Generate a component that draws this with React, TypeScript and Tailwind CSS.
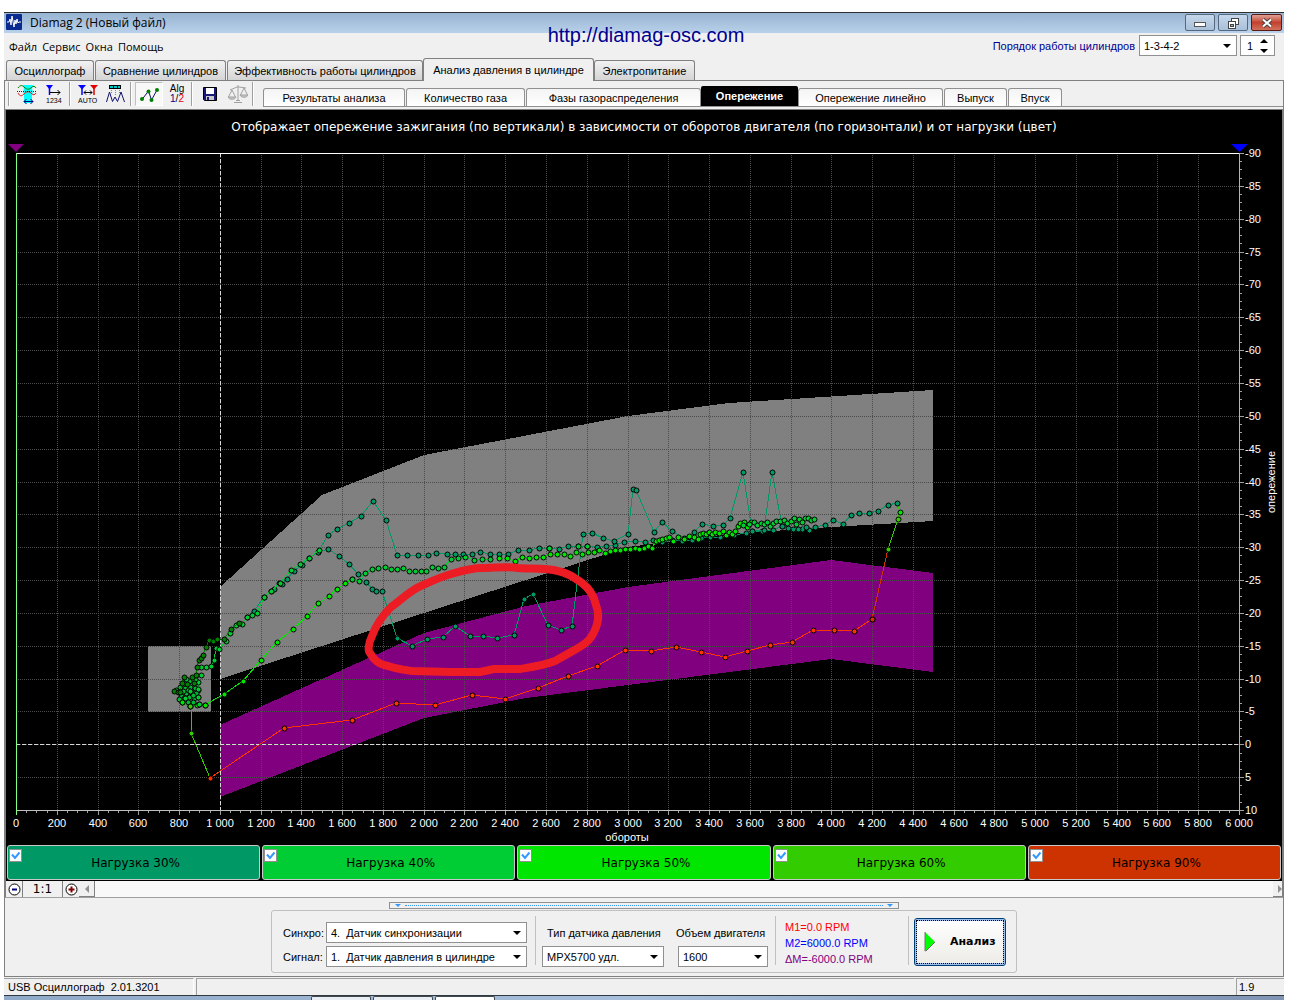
import React from "react";

const X0 = 16;
const X1 = 1239;
const Y0 = 153;
const Y1 = 810;
const px = (rpm: number) => Math.round(X0 + (rpm * (X1 - X0)) / 6000);
const py = (deg: number) => Math.round(Y0 + (deg + 90) * ((Y1 - Y0) / 100));
const area = (pts: number[][]) => pts.map(([a, b]) => `${px(a)},${py(b)}`).join(" ");
const poly = (pts: number[][]) => pts.map((p) => p.join(",")).join(" ");

const greyArea = [
  [1000, -24], [1500, -38], [2000, -44], [3000, -50], [3500, -52], [4500, -54],
  [4500, -34], [4000, -33], [3500, -32], [3000, -30], [1000, -10],
];
const purpleArea = [
  [1000, -3], [2000, -17], [2500, -21], [3000, -24], [4000, -28], [4500, -26],
  [4500, -11], [4000, -13], [3000, -9], [2500, -7], [2000, -4], [1000, 8],
];

const load30 = [
  [247, 617], [254, 611], [264, 597], [271, 591], [274, 589], [279, 583], [282, 584], [287, 579], [294, 571],
  [302, 565], [309, 558], [318, 552], [328, 535], [337, 529], [349, 523], [361, 516], [373, 501], [386, 520],
  [397, 555], [407, 555], [418, 555], [428, 555], [436, 553], [447, 554], [455, 554], [463, 554], [472, 554],
  [480, 552], [490, 554], [499, 554], [508, 554], [518, 550], [529, 550], [539, 548], [549, 548], [559, 549],
  [568, 546], [578, 546], [587, 546], [597, 547], [606, 546], [615, 545], [624, 542], [635, 541], [645, 542],
  [653, 540], [662, 542], [672, 540], [682, 541], [692, 540], [701, 538], [710, 537], [720, 537], [734, 535],
  [746, 533], [752, 531], [762, 531], [773, 530], [782, 526], [793, 529], [802, 529], [809, 530], [815, 527],
  [825, 525], [833, 520], [843, 524], [851, 515], [859, 513], [869, 513], [878, 511], [888, 505], [897, 503],
];
const load30Low = [
  [318, 552], [328, 549], [339, 556], [349, 564], [358, 574], [366, 582], [372, 589], [376, 591], [382, 591],
  [397, 638], [412, 646], [427, 639], [443, 637], [455, 626], [470, 636], [483, 636], [497, 638], [514, 635],
  [524, 599], [533, 594], [548, 625], [561, 630], [572, 626], [583, 534], [592, 533], [603, 538], [614, 541],
  [628, 534], [633, 489], [636, 490], [654, 532], [662, 522], [672, 531], [684, 538], [694, 532], [702, 524],
  [713, 526], [723, 525], [730, 518], [743, 472], [752, 531], [764, 530], [772, 472], [782, 526], [788, 528],
  [798, 529], [806, 527],
];
const load40Rise = [
  [198, 690], [198, 682], [201, 675], [201, 667], [206, 667], [211, 666], [214, 660], [216, 648], [219, 649],
  [226, 641], [230, 633], [236, 625], [242, 624], [247, 617], [252, 615], [257, 613], [264, 597], [271, 591],
  [280, 583], [291, 570], [300, 564], [309, 558], [319, 550],
];
const load40 = [
  [352, 579], [359, 581], [365, 573], [372, 569], [378, 568], [385, 567], [391, 569], [397, 569], [403, 568],
  [409, 571], [415, 571], [421, 571], [426, 571], [432, 567], [438, 568], [444, 567], [451, 559], [458, 558],
  [465, 557], [474, 560], [482, 559], [490, 559],
];
const load50Rise = [
  [182, 702], [190, 706], [197, 705], [205, 705], [224, 694], [243, 681], [261, 660], [277, 642], [293, 629],
  [307, 616], [318, 603], [329, 596], [337, 589], [345, 583], [352, 579],
];
const load50 = [
  [499, 558], [507, 558], [515, 561], [522, 557], [529, 558], [536, 557], [543, 557], [550, 554], [557, 554],
  [564, 554], [570, 556], [576, 552], [582, 554], [588, 552], [594, 552], [599, 550], [605, 553], [610, 551],
  [615, 550], [620, 550], [625, 549], [630, 549], [635, 548], [639, 549], [644, 548], [648, 546], [652, 548],
  [656, 541], [659, 540], [662, 539], [666, 538], [669, 537], [673, 541], [678, 537], [684, 539], [689, 536],
  [694, 537], [698, 539], [700, 534], [703, 533], [706, 534], [709, 532], [712, 534], [715, 532], [719, 533],
  [723, 531], [726, 535], [729, 532], [732, 534], [735, 531], [738, 526], [740, 523], [744, 522], [747, 527],
  [751, 522],
];
const loadMix = [
  [743, 525], [749, 524], [754, 522], [757, 525], [761, 523], [764, 524], [767, 522], [770, 526], [773, 523],
  [776, 521], [780, 521], [784, 520], [787, 523], [791, 521], [794, 518], [796, 524], [799, 519], [802, 522],
  [805, 518], [808, 518], [811, 520], [814, 519],
];
const loadDark = [
  [174, 691], [178, 692], [180, 692], [184, 677], [182, 683], [187, 684], [192, 677], [194, 683], [196, 675],
  [197, 667], [199, 660], [201, 658], [203, 655], [206, 647], [209, 640], [213, 641], [217, 639], [224, 639],
  [231, 629], [239, 623],
];
const idleCloud = [
  [176, 690], [180, 687], [185, 688], [190, 687], [195, 688], [181, 696], [186, 693], [191, 692], [196, 693],
  [179, 699], [184, 698], [189, 697], [194, 698], [198, 697], [188, 702], [193, 702], [199, 704], [189, 681],
  [186, 679], [195, 679], [183, 691], [188, 690], [193, 695],
];
const load60 = [[191, 733], [190, 706]];
const load90 = [
  [210, 778], [284, 728], [352, 720], [396, 703], [435, 705], [472, 695], [505, 699], [538, 688], [568, 676],
  [597, 666], [625, 650], [651, 651], [676, 647], [701, 652], [725, 657], [747, 651], [770, 645], [792, 642],
  [813, 630], [834, 630], [854, 631], [872, 619],
];

function Series({ pts, color, line = true }: { pts: number[][]; color: string; line?: boolean }) {
  return (
    <g>
      {line && <polyline points={poly(pts)} fill="none" stroke={color} shapeRendering="crispEdges" />}
      {pts.map(([x, y], i) => <circle key={i} cx={x + 0.5} cy={y + 0.5} r="2.5" fill={color} stroke="#000" />)}
    </g>
  );
}

function Chart() {
  const xs = Array.from({ length: 31 }, (_, i) => i * 200);
  const ys = Array.from({ length: 21 }, (_, i) => -90 + i * 5);
  const minorX = Array.from({ length: 121 }, (_, i) => i * 50);
  const minorY = Array.from({ length: 81 }, (_, i) => -90 + i * 1.25);
  const label = (n: number) => (n < 1000 ? String(n) : `${Math.floor(n / 1000)} ${String(n % 1000).padStart(3, "0")}`);
  return (
    <svg viewBox="6 110 1276 735" className="block w-full bg-black font-['Liberation_Sans',sans-serif]" role="img" aria-label="Опережение зажигания">
      <text x="644" y="131" textAnchor="middle" fill="#fff" className="font-['DejaVu_Sans',sans-serif] text-[12px]">
        Отображает опережение зажигания (по вертикали) в зависимости от оборотов двигателя (по горизонтали) и от нагрузки (цвет)
      </text>
      <g shapeRendering="crispEdges">
        <polygon points={area(greyArea)} fill="#808080" />
        <rect x="148" y="646" width="63" height="66" fill="#808080" />
        <polygon points={area(purpleArea)} fill="#800080" />
      </g>
      <g shapeRendering="crispEdges" stroke="#4c4c4c" strokeDasharray="1 1">
        {xs.slice(1, 30).map((v) => <line key={v} x1={px(v) + 0.5} x2={px(v) + 0.5} y1={Y0} y2={Y1} />)}
        {ys.slice(1, 20).map((v) => <line key={v} x1={X0} x2={X1} y1={py(v) + 0.5} y2={py(v) + 0.5} />)}
      </g>
      <g shapeRendering="crispEdges">
        <line x1="220.5" x2="220.5" y1={Y0} y2={Y1} stroke="#d8d8d8" strokeDasharray="4 2" />
        <line x1={X0} x2={X1} y1="744.5" y2="744.5" stroke="#d8d8d8" strokeDasharray="4 2" />
        <line x1={X0} x2={X1} y1="153.5" y2="153.5" stroke="#fff" />
        <line x1={X0} x2="1244" y1="810.5" y2="810.5" stroke="#c0c0c0" />
        {minorX.map((v) => <line key={v} x1={px(v) + 0.5} x2={px(v) + 0.5} y1="811" y2={v % 200 ? 813 : 815} stroke="#a0a0a0" />)}
        {minorY.map((v) => <line key={v} x1="1240" x2={v % 5 ? 1242 : 1244} y1={py(v) + 0.5} y2={py(v) + 0.5} stroke="#a0a0a0" />)}
        <line x1="16.5" x2="16.5" y1={Y0} y2="815" stroke="#80ff80" />
        <line x1="1239.5" x2="1239.5" y1={Y0} y2="815" stroke="#c0c050" />
      </g>
      <polygon points="8,144 24,144 16,152" fill="#800080" />
      <polygon points="1231,144 1248,144 1239.5,152" fill="#00f" />

      <polyline points="191,706 191,733 210,778" fill="none" stroke="#33cc00" shapeRendering="crispEdges" />
      <Series pts={load90} color="#ff3300" />
      <polyline points="872,619 888,549" stroke="#cc3300" fill="none" shapeRendering="crispEdges" />
      <polyline points="888,549 898,519 900,512 897,503" stroke="#33cc00" fill="none" shapeRendering="crispEdges" />
      <Series pts={load30} color="#009966" />
      <Series pts={load30Low} color="#009966" />
      <Series pts={load50Rise} color="#00e600" />
      <Series pts={load40Rise} color="#00cc33" />
      <Series pts={idleCloud} color="#00b833" line={false} />
      <Series pts={loadDark} color="#008000" />
      <Series pts={load40} color="#00cc33" />
      <Series pts={load50} color="#00e600" />
      <Series pts={loadMix} color="#00cc33" line={false} />
      <Series pts={[[549, 548], [578, 546], [587, 546]]} color="#00cc33" line={false} />
      <Series pts={[[198, 697], [199, 704], [198, 689], [190, 691], [185, 698]]} color="#00cc33" line={false} />
      <Series pts={[[182, 702], [190, 706], [205, 705], [900, 512]]} color="#00e600" line={false} />
      <Series pts={load60} color="#33cc00" line={false} />
      <Series pts={[[898, 519], [888, 549]]} color="#33cc00" line={false} />
      <Series pts={[[872, 619]]} color="#cc3300" line={false} />

      <path
        d="M518 568C508 566 494 568 483 568C468 568 455 573 448 575C438 578 430 582 423 585C410 590 400 601 391 607C383 615 376 625 372 636C368 644 368 651 370 653C374 660 378 664 388 666C396 669 405 670 412 671L450 672L480 672L494 669L520 669C532 667 545 665 555 661L571 652C584 645 590 641 594 632C600 620 598 610 596 605C594 596 590 589 582 583C574 577 568 573 558 571C546 568 530 569 518 568Z"
        fill="none" stroke="#ed1c24" strokeWidth="8" strokeLinejoin="round"
      />

      <g fill="#fff" className="text-[11px]">
        {xs.map((v) => <text key={v} x={px(v)} y="827" textAnchor="middle">{label(v)}</text>)}
        {ys.map((v) => <text key={v} x="1245" y={py(v) + 4}>{v}</text>)}
        <text x="627" y="841" textAnchor="middle">обороты</text>
        <text transform="translate(1275 482) rotate(-90)" textAnchor="middle">опережение</text>
      </g>
    </svg>
  );
}

const Tool = ({ label, children }: { label: string; children: React.ReactNode }) => (
  <button aria-label={label} className="flex h-6 w-7 items-center justify-center">
    <svg width="20" height="20" fill="none">{children}</svg>
  </button>
);

const Group = ({ children }: { children?: React.ReactNode }) => (
  <div className="flex h-6 w-[62px] border-l border-[#a0a0a0]">
    <span className="w-1 border-l border-white" />
    {children}
  </div>
);

function ToolIcons() {
  return (
    <div className="flex w-[258px] shrink-0 overflow-hidden pl-[3px] pt-px">
      <Group>
        <Tool label="Фазы">
          <path d="M6 1h10l-1 4 1 3-1 3v8H7v-8L6 8l1-3z" fill="#00ffff" />
          <path d="M1 4c2-3 4-3 6-1 3 3 5 3 8 0 1-1 3-1 4 1" stroke="#008000" />
          <path d="M1 9c2 4 4 3 6 1 3-3 5-3 8 0 1 1 3 1 4-1" stroke="#e02020" />
          <path d="M0 7.500h20" stroke="#222" strokeDasharray="1 1" shapeRendering="crispEdges" />
          <path d="M7 17.500h9M9.500 15l-2.500 2.500 2.500 2.500M13.500 15l2.500 2.500-2.500 2.500" stroke="#000080" />
        </Tool>
        <Tool label="Маркер 1234">
          <path d="M1 1h7L4.500 5.500z" fill="#00f" /><path d="M4.500 1v10" stroke="#00f" strokeWidth="1.500" />
          <path d="M5 8.500h10M12.500 6l2.500 2.500-2.500 2.500" stroke="#000" />
          <text x="1" y="19" fill="#000" className="text-[7px]">1234</text>
        </Tool>
      </Group>
      <Group>
        <Tool label="Авто">
          <path d="M0 1h8L4 5.500z" fill="#00f" /><path d="M4 1v10" stroke="#00f" strokeWidth="1.500" />
          <path d="M12 1h8l-4 4.500z" fill="#e00000" /><path d="M16 1v10" stroke="#e00000" strokeWidth="1.500" />
          <path d="M6 8.500h8M8 6.500l-2 2 2 2M12 6.500l2 2-2 2" stroke="#000" />
          <text x="0" y="19" fill="#000" className="text-[7px]">AUTO</text>
        </Tool>
        <Tool label="Датчик">
          <rect x="3.500" y="1.500" width="11" height="3" fill="#00c8c8" stroke="#000" shapeRendering="crispEdges" />
          <path d="M7.500 2v2M11.500 2v2" stroke="#000" shapeRendering="crispEdges" />
          <path d="M5.500 6v4M9.500 6v6M13.500 6v4" stroke="#888" strokeDasharray="1 1" shapeRendering="crispEdges" />
          <path d="M.5 18L3.500 8l3 9.500L9 13l2.500 4.500L15 8l3.500 10" stroke="#101070" />
        </Tool>
      </Group>
      <Group>
        <span className="flex h-6 w-7 items-center justify-center border border-[#c0c0c0] border-b-white border-r-white bg-[#f8f8f8]">
          <Tool label="Линии">
            <path d="M3 15.500L9.500 7l3 9 5.500-10" stroke="#101070" />
            <circle cx="3" cy="15" r="2" fill="#008000" /><circle cx="9.500" cy="7.500" r="2" fill="#008000" /><circle cx="12.500" cy="16" r="2" fill="#008000" /><circle cx="18" cy="6" r="2" fill="#008000" />
          </Tool>
        </span>
        <button aria-label="Алгоритм" className="flex h-6 w-7 flex-col items-center justify-center text-[10px] leading-[10px]">
          <span>Alg</span>
          <span><b className="font-normal text-[#000080]">1</b>/<b className="font-normal text-red-600">2</b></span>
        </button>
      </Group>
      <Group>
        <Tool label="Сохранить">
          <path d="M3.500 3.500h13v13h-12l-1-1z" fill="#181878" stroke="#000" />
          <rect x="6" y="4" width="8" height="6" fill="#fff" /><rect x="6" y="12" width="8" height="4" fill="#c8c8c8" /><rect x="7" y="13" width="2" height="3" fill="#181878" />
        </Tool>
        <Tool label="Сравнить">
          <path d="M2 6l7-3h2l7 1M10 1v16M6 18.500h8M8 16.500h4M4 6l-3.500 7M4 6l3.500 7M16 4l-3.500 7M16 4l3.500 7" stroke="#a0a0a0" />
          <path d="M0 13h8c-1 3-7 3-8 0zM12 11h8c-1 3-7 3-8 0z" stroke="#a0a0a0" fill="#c8c8c8" />
        </Tool>
      </Group>
      <Group />
    </div>
  );
}

const Drop = ({ label, value, w }: { label: string; value: string; w: string }) => (
  <span className={`relative block ${w}`}>
    <select aria-label={label} defaultValue={value} className="block h-[21px] w-full appearance-none border border-[#909090] bg-white pl-1 text-[11px] leading-[18px] text-black">
      <option value={value}>{value}</option>
    </select>
    <svg className="pointer-events-none absolute right-[6px] top-[9px]" width="8" height="4"><path d="M0 0h8L4 4z" fill="#000" /></svg>
  </span>
);

const loads = [
  ["Нагрузка 30%", "bg-[#009966]"],
  ["Нагрузка 40%", "bg-[#00cc33]"],
  ["Нагрузка 50%", "bg-[#00e600]"],
  ["Нагрузка 60%", "bg-[#33cc00]"],
  ["Нагрузка 90%", "bg-[#cc3300]"],
];

const tab = "h-5 rounded-t-[3px] border border-b-0 border-[#808080] bg-linear-to-b from-[#f2f2f2] to-[#d4d4d4] whitespace-nowrap";
const sub = "h-[18px] rounded-t-[3px] border border-b-0 border-[#909090] bg-linear-to-b from-[#f4f4f4] to-white whitespace-nowrap";

export default function App() {
  return (
    <div className="bg-white pl-1 pr-3 pt-3 font-['Liberation_Sans',sans-serif] text-[11px] leading-4 text-black">
      <div className="relative border-t border-[#303030] bg-[#f0f0f0]">
        <header className="flex h-5 items-center bg-linear-to-b from-[#98b4d2] to-[#b9d1ea] pl-[2px]">
          <svg width="16" height="16" className="-mt-0.5"><rect width="16" height="16" rx="1" fill="#0a2a90" /><path d="M1 8h2l1-3 1 6 1-9 2 11 1-7 1 4 1-5 1 4 1-1h2" stroke="#fff" fill="none" /></svg>
          <h1 className="ml-2 font-['Open_Sans',sans-serif] text-[12px] font-normal">Diamag 2 (Новый файл)</h1>
          <div className="-mt-px ml-auto flex gap-[3px] pr-[2px]">
            <button aria-label="Свернуть" className="flex h-[17px] w-[30px] items-center justify-center rounded-xs border border-[#56687e] bg-linear-to-b from-[#c5d7ea] to-[#a9c0da]">
              <svg width="12" height="5" className="mt-1"><rect x=".5" y=".5" width="11" height="4" fill="#fff" stroke="#555" /></svg>
            </button>
            <button aria-label="Восстановить" className="flex h-[17px] w-[30px] items-center justify-center rounded-xs border border-[#56687e] bg-linear-to-b from-[#c5d7ea] to-[#a9c0da]">
              <svg width="12" height="12"><rect x="4.500" y="1.500" width="7" height="6" fill="#fff" stroke="#444" /><rect x="1.500" y="4.500" width="7" height="7" fill="#fff" stroke="#444" /><rect x="3.500" y="7.500" width="3" height="2" fill="#8aa" stroke="#444" /></svg>
            </button>
            <button aria-label="Закрыть" className="flex h-[17px] w-[31px] items-center justify-center rounded-xs border border-[#5a1a14] bg-linear-to-b from-[#dfa096] via-[#c4402e] to-[#d0705c]">
              <svg width="12" height="10"><path d="M2 1.500l8 7M10 1.500l-8 7" stroke="#444" strokeWidth="4" /><path d="M2 1.500l8 7M10 1.500l-8 7" stroke="#fff" strokeWidth="2" /></svg>
            </button>
          </div>
        </header>
        <a href="http://diamag-osc.com" className="absolute inset-x-0 top-[10px] mx-auto w-fit pl-1 text-[20px] leading-6 text-[#000090]">http://diamag-osc.com</a>

        <div className="flex h-[25px] items-start pl-[5px] pr-[9px]">
          <nav className="mt-1.5 flex gap-[5px] font-['Open_Sans',sans-serif] text-[11px]">
            <button>Файл</button><button>Сервис</button><button>Окна</button><button>Помощь</button>
          </nav>
          <span className="ml-auto mr-1 mt-[5px] text-[#000090]">Порядок работы цилиндров</span>
          <span className="mt-[2px]"><Drop label="Порядок работы цилиндров" value="1-3-4-2" w="w-[98px]" /></span>
          <label className="ml-[3px] mt-[2px] flex h-[21px] w-[35px] items-center border border-[#909090] bg-white">
            <input aria-label="Цилиндр" defaultValue="1" className="w-[19px] bg-transparent pl-1.5" />
            <svg width="8" height="14"><path d="M0 4h8L4 0zM0 10h8l-4 4z" fill="#000" /></svg>
          </label>
        </div>

        <div role="tablist" className="flex h-[23px] items-end border-b border-[#808080] pl-[2px]">
          <button role="tab" className={`${tab} w-[88px]`}>Осциллограф</button>
          <button role="tab" className={`${tab} ml-px w-[131px]`}>Сравнение цилиндров</button>
          <button role="tab" className={`${tab} ml-px w-[196px]`}>Эффективность работы цилиндров</button>
          <button role="tab" aria-selected="true" className="-mb-px h-[23px] w-[171px] whitespace-nowrap rounded-t-[3px] border border-b-0 border-[#808080] bg-[#f0f0f0]">Анализ давления в цилиндре</button>
          <button role="tab" className={`${tab} w-[101px]`}>Электропитание</button>
        </div>

        <main className="border-x border-[#808080]">
          <div className="flex h-[28px] items-start">
            <ToolIcons />
            <div role="tablist" className="flex h-[26px] flex-1 items-end border-b border-[#909090]">
              <button role="tab" className={`${sub} w-[142px]`}>Результаты анализа</button>
              <button role="tab" className={`${sub} ml-px w-[119px]`}>Количество газа</button>
              <button role="tab" className={`${sub} ml-px w-[175px]`}>Фазы газораспределения</button>
              <button role="tab" aria-selected="true" className="h-5 w-[97px] rounded-t-[2px] bg-black font-bold text-white">Опережение</button>
              <button role="tab" className={`${sub} w-[145px]`}>Опережение линейно</button>
              <button role="tab" className={`${sub} ml-px w-[63px]`}>Выпуск</button>
              <button role="tab" className={`${sub} ml-px w-[54px]`}>Впуск</button>
            </div>
          </div>
          <div className="border-x border-t border-[#808080]">
            <Chart />
            <div className="grid grid-cols-5 gap-[2px] bg-black px-px pb-px">
              {loads.map(([name, bg]) => (
                <label key={name} className={`relative flex h-[35px] items-center justify-center rounded-[3px] border border-[#c8c8c8] ${bg} pl-1 font-['DejaVu_Sans',sans-serif] text-[12px]`}>
                  <input type="checkbox" defaultChecked className="absolute left-px top-[3px] size-[13px] appearance-none border border-[#909090] bg-white" />
                  <svg className="pointer-events-none absolute left-[3px] top-[5px]" width="9" height="9"><path d="M1 3.500l3 3.500L8.500 1.500" stroke="#3399ff" strokeWidth="2" fill="none" /></svg>
                  {name}
                </label>
              ))}
            </div>
            <div className="flex h-4 items-stretch bg-[#f8f8f8]">
              <button aria-label="Уменьшить" className="flex w-[17px] items-center justify-center border-r border-[#808080] bg-[#f0f0f0]"><svg width="13" height="13"><circle cx="6.500" cy="6.500" r="5.500" fill="#fff" stroke="#000" /><path d="M4 6.500h5" stroke="#000080" strokeWidth="2" /></svg></button>
              <button className="w-10 border-r border-[#808080] bg-[#f0f0f0] font-['DejaVu_Sans',sans-serif] text-[12px] leading-4">1:1</button>
              <button aria-label="Увеличить" className="flex w-4 items-center justify-center bg-[#f0f0f0]"><svg width="13" height="13"><circle cx="6.500" cy="6.500" r="5.500" fill="#fff" stroke="#000" /><path d="M3.500 6.500h6M6.500 3.500v6" stroke="#800000" strokeWidth="2" /></svg></button>
              <button aria-label="Влево" className="flex w-4 items-center justify-center border-b border-r border-[#808080] bg-[#f0f0f0]"><svg width="4" height="8"><path d="M4 0v8L0 4z" fill="#909090" /></svg></button>
              <button aria-label="Вправо" className="ml-auto flex w-[9px] items-center justify-end border-b border-[#808080] bg-[#f0f0f0]"><svg width="4" height="8"><path d="M0 0v8l4-4z" fill="#909090" /></svg></button>
            </div>
          </div>
          <div className="h-20 border-y border-b-[#808080] border-t-[#a0a0a0]">
            <div className="mx-auto mt-1 flex h-[7px] w-[510px] items-center border border-[#909090] px-[5px]">
              <svg width="6" height="3"><path d="M0 0h6L3 3z" fill="#3399ff" /></svg>
              <span className="mx-1 h-px flex-1 border-t border-dotted border-[#3399ff]" />
              <svg width="6" height="3"><path d="M0 0h6L3 3z" fill="#3399ff" /></svg>
            </div>
            <div className="mx-auto mt-px flex h-[63px] w-[746px] rounded-[3px] border border-[#c0c0c0] pl-[11px]">
              <div className="mt-[11px] grid h-fit grid-cols-[43px_201px] items-center gap-y-[3px]">
                <span>Синхро:</span><Drop label="Синхро" value={"4.\u00a0 Датчик синхронизации"} w="w-full" />
                <span>Сигнал:</span><Drop label="Сигнал" value={"1.\u00a0 Датчик давления в цилиндре"} w="w-full" />
              </div>
              <span className="ml-2 mt-[5px] h-[49px] w-px bg-[#c0c0c0]" />
              <div className="ml-1.5 mt-[14px]">
                <span className="block pl-[5px]">Тип датчика давления</span>
                <div className="mt-[5px]"><Drop label="Тип датчика давления" value="MPX5700 удл." w="w-[122px]" /></div>
              </div>
              <div className="ml-3 mt-[14px] w-[98px]">
                <span className="block whitespace-nowrap">Объем двигателя</span>
                <div className="mt-[5px] pl-0.5"><Drop label="Объем двигателя" value="1600" w="w-[90px]" /></div>
              </div>
              <span className="ml-px mt-[5px] h-[49px] w-px bg-[#c0c0c0]" />
              <div className="ml-[9px] mt-2 w-[123px]">
                <div className="text-[#f00]">M1=0.0 RPM</div>
                <div className="text-[#00f]">M2=6000.0 RPM</div>
                <div className="text-[#800080]">ΔM=-6000.0 RPM</div>
              </div>
              <span className="mt-[5px] h-[49px] w-px bg-[#c0c0c0]" />
              <button className="ml-[5px] mt-[7px] flex h-[48px] w-[92px] items-center rounded-[3px] border border-[#003c74] bg-linear-to-b from-white to-[#ecebe6] p-px font-['DejaVu_Sans',sans-serif] text-[11px] font-bold shadow-[inset_0_0_0_2px_#9cc0ee]">
                <span className="flex h-full w-full items-center border border-dotted border-black pl-[7px]">
                  <svg width="12" height="20"><path d="M1 0v20L11 10z" fill="#00ff00" /><path d="M1 0v19M2 19l9-9" stroke="#707070" fill="none" /></svg>
                  <span className="ml-[14px]">Анализ</span>
                </span>
              </button>
            </div>
          </div>
        </main>

        <footer className="flex h-[18px] gap-[2px] pt-px">
          <div className="w-[190px] whitespace-pre border-r border-t border-[#a0a0a0] border-r-white pl-1">USB Осциллограф  2.01.3201</div>
          <div className="flex-1 border-l border-t border-[#a0a0a0]" />
          <div className="w-12 border-l border-t border-[#a0a0a0] pl-0.5">1.9</div>
        </footer>
        <div className="flex h-[5px] border-t border-[#303840] bg-linear-to-r from-[#8fa9c8] via-[#a8c0dc] to-[#8095b4] pl-[307px]">
          <span className="w-[60px] rounded-t-xs border border-b-0 border-[#404850] bg-[#e8eef4]" />
          <span className="ml-0.5 w-[60px] rounded-t-xs border border-b-0 border-[#404850] bg-[#e8eef4]" />
          <span className="ml-0.5 w-[60px] rounded-t-xs border border-b-0 border-[#404850] bg-white" />
        </div>
      </div>
    </div>
  );
}
